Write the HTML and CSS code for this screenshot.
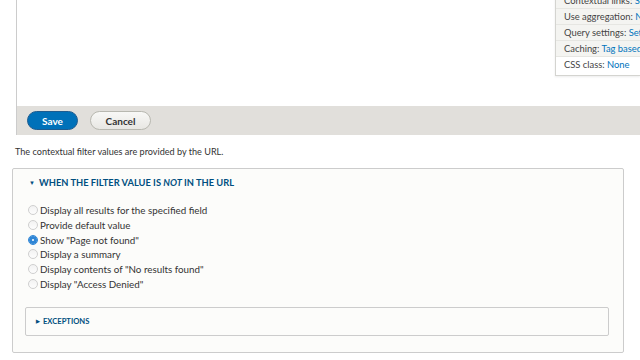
FILE: index.html
```html
<!DOCTYPE html>
<html lang="en">
<head>
    <meta charset="UTF-8">
    <title>Contextual filter</title>
    <link rel="stylesheet" href="styles.css">
</head>
<body>
    <div class="view-edit">
        <div class="view-body">
            <div class="settings-panel">
                <div class="setting-row">Contextual links: <a href="#">Shown</a></div>
                <div class="setting-row">Use aggregation: <a href="#">No</a></div>
                <div class="setting-row">Query settings: <a href="#">Settings</a></div>
                <div class="setting-row">Caching: <a href="#">Tag based</a></div>
                <div class="setting-row">CSS class: <a href="#">None</a></div>
            </div>
        </div>
        <div class="form-actions">
            <button class="btn btn-primary">Save</button>
            <button class="btn btn-cancel">Cancel</button>
        </div>
    </div>

    <p class="description">The contextual filter values are provided by the URL.</p>

    <div class="fieldset">
        <div class="fieldset-title"><span class="arrow">&#9660;</span>WHEN THE FILTER VALUE IS <em>NOT</em> IN THE URL</div>
        <div class="radios">
            <label class="radio"><span class="radio-dot"></span>Display all results for the specified field</label>
            <label class="radio"><span class="radio-dot"></span>Provide default value</label>
            <label class="radio"><span class="radio-dot checked"></span>Show "Page not found"</label>
            <label class="radio"><span class="radio-dot"></span>Display a summary</label>
            <label class="radio"><span class="radio-dot"></span>Display contents of "No results found"</label>
            <label class="radio"><span class="radio-dot"></span>Display "Access Denied"</label>
        </div>
        <div class="details">
            <div class="details-title"><span class="arrow small">&#9654;</span>EXCEPTIONS</div>
        </div>
    </div>
</body>
</html>
```

FILE: styles.css
```css
:root {
    --link-color: #0074bd;
    --title-color: #004f80;
    --text-color: #333333;
    --border-color: #cccccc;
}

body, html {
    margin: 0;
    font-family: "Lato", "Noto Sans", sans-serif;
    font-size: 9px;
    color: var(--text-color);
    background-color: #ffffff;
}

a {
    color: var(--link-color);
    text-decoration: none;
}

.view-edit {
    margin-left: 16px;
    border-left: 1px solid var(--border-color);
}

.view-body {
    height: 106px;
    display: flex;
    justify-content: flex-end;
    align-items: flex-start;
    overflow: hidden;
}

.settings-panel {
    width: 84px;
    margin-top: -7px;
    background-color: #f4f4f1;
    border-left: 1px solid #d4d4d0;
    border-bottom: 1px solid #d4d4d0;
    box-shadow: 0 1px 2px rgba(0, 0, 0, 0.08);
}

.setting-row {
    height: 15px;
    line-height: 15px;
    padding-left: 8px;
    font-size: 9.4px;
    white-space: nowrap;
    overflow: hidden;
    border-bottom: 1px solid #e6e6e2;
    color: #444;
}

.setting-row:last-child {
    background-color: #ffffff;
    border-bottom: none;
    height: 18px;
    line-height: 16px;
}

.form-actions {
    height: 29px;
    background-color: #e1dfdb;
    display: flex;
    align-items: center;
    gap: 12px;
    padding-left: 10px;
}

.btn {
    font-family: inherit;
    font-size: 10px;
    font-weight: bold;
    height: 19px;
    padding: 0;
    border-radius: 10px;
    border: 1px solid #b8b8b0;
    background: linear-gradient(#f8f8f6, #e8e7e3);
    color: #333;
}

.btn-primary {
    background: #0071b9;
    border-color: #1e5c90;
    color: #ffffff;
    width: 51px;
}

.btn-cancel {
    width: 61px;
}

.description {
    margin: 11px 0 0 15px;
    height: 12px;
    line-height: 12px;
    font-size: 9.1px;
}

.fieldset {
    margin: 10px 16px 0 12px;
    height: 185px;
    border: 1px solid var(--border-color);
    border-radius: 2px;
    background-color: #fcfcfa;
    box-sizing: border-box;
    padding: 0 14px 0 12px;
}

.arrow {
    display: inline-block;
    width: 10px;
    font-size: 6px;
    vertical-align: 1px;
}

.arrow.small {
    width: 7px;
    font-size: 5px;
}

.fieldset-title {
    font-weight: bold;
    font-size: 9.3px;
    color: var(--title-color);
    height: 28px;
    line-height: 28px;
    padding-left: 4px;
}

.fieldset-title em {
    font-style: italic;
}

.radios {
    margin-top: 6px;
    padding-left: 3px;
    display: flex;
    flex-direction: column;
}

.radio {
    display: flex;
    align-items: center;
    height: 14.7px;
    font-size: 9.8px;
    color: #333;
}

.radio-dot {
    width: 10px;
    height: 10px;
    border-radius: 50%;
    border: 1px solid #cfcfcf;
    background: linear-gradient(#f2f2f2, #fdfdfd);
    box-sizing: border-box;
    margin-right: 2px;
}

.radio-dot.checked {
    background: #ffffff;
    border-color: #2f86d6;
    box-shadow: inset 0 0 0 3px #2f86d6;
}

.details {
    margin-top: 16px;
    height: 29px;
    border: 1px solid var(--border-color);
    border-radius: 2px;
    box-sizing: border-box;
    background-color: #fcfcfa;
}

.details-title {
    font-weight: bold;
    color: var(--title-color);
    line-height: 27px;
    padding-left: 10px;
    font-size: 7.6px;
}
```
